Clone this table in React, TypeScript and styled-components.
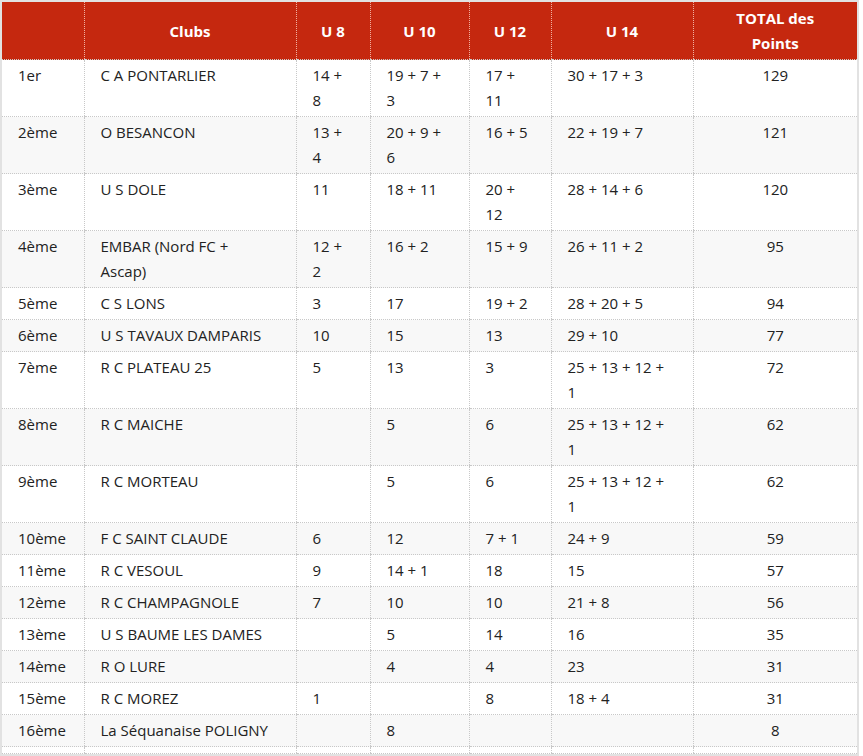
import React from "react";
import styled, { createGlobalStyle } from "styled-components";

type Row = {
  rank: string;
  club: React.ReactNode;
  u8?: React.ReactNode;
  u10?: React.ReactNode;
  u12?: React.ReactNode;
  u14?: React.ReactNode;
  total: string;
};

// classement final, les retours à la ligne suivent la capture
const rows: Row[] = [
  { rank: "1er", club: "C A PONTARLIER", u8: <>14 +<br />8</>, u10: <>19 + 7 +<br />3</>, u12: <>17 +<br />11</>, u14: "30 + 17 + 3", total: "129" },
  { rank: "2ème", club: "O BESANCON", u8: <>13 +<br />4</>, u10: <>20 + 9 +<br />6</>, u12: "16 + 5", u14: "22 + 19 + 7", total: "121" },
  { rank: "3ème", club: "U S DOLE", u8: "11", u10: "18 + 11", u12: <>20 +<br />12</>, u14: "28 + 14 + 6", total: "120" },
  { rank: "4ème", club: <>EMBAR (Nord FC +<br />Ascap)</>, u8: <>12 +<br />2</>, u10: "16 + 2", u12: "15 + 9", u14: "26 + 11 + 2", total: "95" },
  { rank: "5ème", club: "C S LONS", u8: "3", u10: "17", u12: "19 + 2", u14: "28 + 20 + 5", total: "94" },
  { rank: "6ème", club: "U S TAVAUX DAMPARIS", u8: "10", u10: "15", u12: "13", u14: "29 + 10", total: "77" },
  { rank: "7ème", club: "R C PLATEAU 25", u8: "5", u10: "13", u12: "3", u14: <>25 + 13 + 12 +<br />1</>, total: "72" },
  { rank: "8ème", club: "R C MAICHE", u10: "5", u12: "6", u14: <>25 + 13 + 12 +<br />1</>, total: "62" },
  { rank: "9ème", club: "R C MORTEAU", u10: "5", u12: "6", u14: <>25 + 13 + 12 +<br />1</>, total: "62" },
  { rank: "10ème", club: "F C SAINT CLAUDE", u8: "6", u10: "12", u12: "7 + 1", u14: "24 + 9", total: "59" },
  { rank: "11ème", club: "R C VESOUL", u8: "9", u10: "14 + 1", u12: "18", u14: "15", total: "57" },
  { rank: "12ème", club: "R C CHAMPAGNOLE", u8: "7", u10: "10", u12: "10", u14: "21 + 8", total: "56" },
  { rank: "13ème", club: "U S BAUME LES DAMES", u10: "5", u12: "14", u14: "16", total: "35" },
  { rank: "14ème", club: "R O LURE", u10: "4", u12: "4", u14: "23", total: "31" },
  { rank: "15ème", club: "R C MOREZ", u8: "1", u12: "8", u14: "18 + 4", total: "31" },
  { rank: "16ème", club: "La Séquanaise POLIGNY", u10: "8", total: "8" },
];

const widths = [82, 212, 74, 99, 82, 142, 164];

const GlobalStyle = createGlobalStyle`
  body {
    margin: 0;
    background: #fff;
    font-family: "Open Sans", "Noto Sans", sans-serif;
  }
`;

const Wrapper = styled.div`
  width: 855px;
  border: 2px solid #e2e2e2;
`;

const Table = styled.table`
  width: 855px;
  table-layout: fixed;
  border-collapse: collapse;
  font-size: 15px;
  line-height: 25px;
  color: #222;
`;

const HeadCell = styled.th`
  background: #c5280f;
  color: #fff;
  font-weight: 700;
  text-align: center;
  padding: 4px 16px 3px;
  border-left: 1px dotted #f0b0a0;
  border-bottom: 1px dotted #ccc;
  &:first-child {
    border-left: none;
  }
`;

const BodyRow = styled.tr<{ $striped: boolean }>`
  background: ${({ $striped }) => ($striped ? "#f8f8f8" : "#fff")};
`;

const Cell = styled.td<{ $center?: boolean }>`
  padding: 3px 16px;
  vertical-align: top;
  white-space: nowrap;
  text-align: ${({ $center }) => ($center ? "center" : "left")};
  border-left: 1px dotted #c8c8c8;
  border-bottom: 1px dotted #c8c8c8;
  &:first-child {
    border-left: none;
  }
`;

export default function App() {
  return (
    <>
      <GlobalStyle />
      <Wrapper>
        <Table>
          <colgroup>
            {widths.map((w, i) => (
              <col key={i} style={{ width: w }} />
            ))}
          </colgroup>
          <thead>
            <tr>
              <HeadCell />
              <HeadCell>Clubs</HeadCell>
              <HeadCell>U 8</HeadCell>
              <HeadCell>U 10</HeadCell>
              <HeadCell>U 12</HeadCell>
              <HeadCell>U 14</HeadCell>
              <HeadCell>
                TOTAL des
                <br />
                Points
              </HeadCell>
            </tr>
          </thead>
          <tbody>
            {rows.map((r, i) => (
              <BodyRow key={r.rank} $striped={i % 2 === 1}>
                <Cell>{r.rank}</Cell>
                <Cell>{r.club}</Cell>
                <Cell>{r.u8}</Cell>
                <Cell>{r.u10}</Cell>
                <Cell>{r.u12}</Cell>
                <Cell>{r.u14}</Cell>
                <Cell $center>{r.total}</Cell>
              </BodyRow>
            ))}
            {/* ligne vide en bas du tableau */}
            <BodyRow $striped={false}>
              {widths.map((_, i) => (
                <Cell key={i} />
              ))}
            </BodyRow>
          </tbody>
        </Table>
      </Wrapper>
    </>
  );
}
